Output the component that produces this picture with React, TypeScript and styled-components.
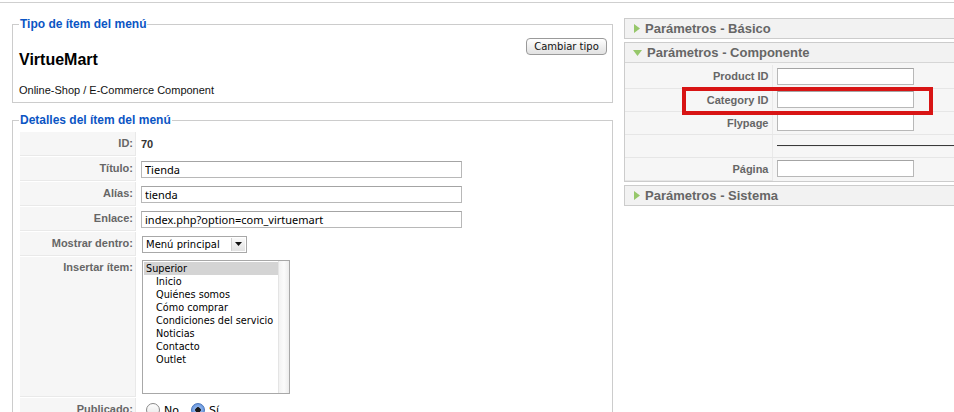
import React from 'react';
import styled, { createGlobalStyle } from 'styled-components';

const GlobalStyle = createGlobalStyle`
  html, body {
    margin: 0;
    padding: 0;
    overflow: hidden;
    background: #fff;
    font-family: "Liberation Sans", Arial, sans-serif;
  }
`;

const TopBar = styled.div`
  height: 2px;
  border-bottom: 1px solid #cfcfcf;
`;

const Columns = styled.div`
  display: flex;
  align-items: flex-start;
  gap: 11px;
  padding: 14px 0 0 12px;
`;

const LeftCol = styled.div`
  width: 601px;
  flex-shrink: 0;
`;

const RightCol = styled.div`
  position: relative;
  width: 340px;
  flex-shrink: 0;
  margin-top: 1px;
`;

const Fieldset = styled.fieldset<{ $gap?: number }>`
  margin: ${(p) => p.$gap ?? 0}px 0 0 0;
  padding: 0 5px 5px 6px;
  border: 1px solid #cccccc;
  min-width: 0;
  box-sizing: border-box;
`;

const Legend = styled.legend`
  padding: 0 1px;
  color: #0b55c4;
  font-size: 12px;
  font-weight: bold;
  line-height: 14px;
`;

const TypeHeader = styled.div`
  display: flex;
  justify-content: space-between;
  align-items: flex-start;
  margin-top: 7px;
`;

const TypeName = styled.h2`
  margin: 0;
  padding-top: 12px;
  font-size: 16px;
  line-height: 20px;
  font-weight: bold;
  color: #000;
`;

const TypeDesc = styled.div`
  margin-top: 13px;
  font-size: 11px;
  line-height: 14px;
  color: #111;
`;

const MacButton = styled.button`
  width: 81px;
  height: 17px;
  padding: 0;
  border: 1px solid #9a9a9a;
  border-radius: 4px;
  background: linear-gradient(#ffffff, #ececec 60%, #e2e2e2);
  font-family: "DejaVu Sans", sans-serif;
  font-size: 10px;
  line-height: 15px;
  color: #111;
`;

const AdminTable = styled.table`
  border-collapse: separate;
  border-spacing: 1px;
  margin: 4px 0 0 0;
`;

const KeyCell = styled.td<{ $top?: boolean }>`
  box-sizing: border-box;
  width: 116px;
  height: 24px;
  padding: ${(p) => (p.$top ? '4px 2px 0 0' : '0 2px 0 0')};
  vertical-align: ${(p) => (p.$top ? 'top' : 'middle')};
  text-align: right;
  background: #f6f6f6;
  border-bottom: 1px solid #e9e9e9;
  border-right: 1px solid #e9e9e9;
  color: #666;
  font-size: 11px;
  line-height: 13px;
  font-weight: bold;
`;

const ValueCell = styled.td<{ $top?: boolean }>`
  box-sizing: border-box;
  height: 24px;
  padding: ${(p) => (p.$top ? '3px 4px 3px 4px' : '0 4px')};
  vertical-align: ${(p) => (p.$top ? 'top' : 'middle')};
  font-size: 11px;
  line-height: 13px;
`;

const StrongValue = styled.span`
  font-weight: bold;
  color: #333;
`;

const TextInput = styled.input<{ $w: number }>`
  display: block;
  box-sizing: border-box;
  width: ${(p) => p.$w}px;
  height: 17px;
  margin: 0;
  padding: 0 3px;
  border: 1px solid #b8b8b8;
  border-top-color: #a4a4a4;
  background: #fff;
  font-family: "Noto Sans", "DejaVu Sans", sans-serif;
  font-size: 11px;
  color: #000;
  outline: none;
`;

const FakeSelect = styled.div`
  display: flex;
  box-sizing: border-box;
  width: 105px;
  height: 17px;
  margin-left: 1px;
  border: 1px solid #a8a8a8;
  background: #fff;
  font-family: "DejaVu Sans", sans-serif;
  font-size: 10px;
  line-height: 15px;
  color: #000;
`;

const SelectText = styled.span`
  flex: 1;
  padding-left: 3px;
`;

const SelectArrow = styled.span`
  display: flex;
  align-items: center;
  justify-content: center;
  width: 13px;
  margin: 1px;
  background: linear-gradient(#fafafa, #e2e2e2);
  border-left: 1px solid #d0d0d0;
`;

const ListBox = styled.div`
  display: flex;
  box-sizing: border-box;
  width: 148px;
  height: 134px;
  margin-left: 1px;
  border: 1px solid #a8a8a8;
  background: #fff;
  font-family: "DejaVu Sans", sans-serif;
  font-size: 9.7px;
`;

const ListItems = styled.div`
  flex: 1;
  padding: 1px 0 0 1px;
`;

const ListItem = styled.div<{ $selected?: boolean; $depth: number }>`
  height: 13px;
  line-height: 13px;
  padding-left: ${(p) => 2 + p.$depth * 10}px;
  background: ${(p) => (p.$selected ? '#d4d4d4' : 'transparent')};
  color: #000;
  white-space: nowrap;
`;

const ScrollTrack = styled.div`
  width: 10px;
  border-left: 1px solid #e4e4e4;
  background: linear-gradient(90deg, #f2f2f2, #fbfbfb 50%, #ececec);
`;

const RadioGroup = styled.div`
  display: flex;
  align-items: center;
  gap: 4px;
  padding-left: 5px;
  font-family: "DejaVu Sans", sans-serif;
  font-size: 11px;
`;

const Radio = styled.span<{ $on?: boolean }>`
  box-sizing: border-box;
  width: 14px;
  height: 14px;
  border-radius: 50%;
  border: 1px solid ${(p) => (p.$on ? '#4a74b8' : '#8a8a8a')};
  background: ${(p) =>
    p.$on
      ? 'radial-gradient(circle, #1a1a1a 0 2.5px, #8fb3ec 3px, #4f86d6)'
      : 'linear-gradient(#fefefe, #e6e6e6)'};
`;

const RadioLabel = styled.span`
  margin-right: 8px;
  color: #000;
`;

const Panel = styled.div`
  border: 1px solid #cccccc;
  margin-bottom: 3px;
  background: #f6f6f6;
`;

const PanelHeader = styled.div<{ $open?: boolean }>`
  display: flex;
  align-items: center;
  gap: 5px;
  height: 19px;
  padding-left: ${(p) => (p.$open ? 8 : 9)}px;
  background: #f2f2f2;
  border-bottom: ${(p) => (p.$open ? '1px solid #d6d6d6' : 'none')};
  color: #666;
  font-size: 13px;
  font-weight: bold;
  line-height: 19px;
`;

const ParamTable = styled.table`
  width: 100%;
  border-collapse: collapse;
  margin: 2px 0 0;
`;

const ParamKey = styled.td`
  box-sizing: border-box;
  width: 147px;
  height: 23px;
  padding: 0 3px 0 0;
  text-align: right;
  vertical-align: middle;
  border-bottom: 1px solid #e6e6e6;
  border-right: 1px solid #e9e9e9;
  color: #666;
  font-size: 11px;
  font-weight: bold;
`;

const ParamValue = styled.td<{ $last?: boolean }>`
  box-sizing: border-box;
  height: 23px;
  padding: 0 0 0 4px;
  vertical-align: middle;
  border-bottom: ${(p) => (p.$last ? 'none' : '1px solid #e6e6e6')};
`;

const Spacer = styled.hr`
  margin: 0;
  border: 0;
  border-top: 1px solid #3a3a3a;
  border-bottom: 1px solid #ececec;
`;

const Highlight = styled.div`
  position: absolute;
  left: 58px;
  top: 69px;
  width: 251px;
  height: 28px;
  box-sizing: border-box;
  border: 4px solid #d81414;
  pointer-events: none;
`;

function Arrow({ open }: { open?: boolean }) {
  return open ? (
    <svg width="9" height="6" viewBox="0 0 9 6">
      <path d="M0 0 H9 L4.5 6 Z" fill="#96c76a" />
    </svg>
  ) : (
    <svg width="6" height="9" viewBox="0 0 6 9">
      <path d="M0 0 L6 4.5 L0 9 Z" fill="#96c76a" />
    </svg>
  );
}

const menuItems = [
  { label: 'Superior', depth: 0, selected: true },
  { label: 'Inicio', depth: 1 },
  { label: 'Quiénes somos', depth: 1 },
  { label: 'Cómo comprar', depth: 1 },
  { label: 'Condiciones del servicio', depth: 1 },
  { label: 'Noticias', depth: 1 },
  { label: 'Contacto', depth: 1 },
  { label: 'Outlet', depth: 1 },
];

const params = [
  { key: 'Product ID' },
  { key: 'Category ID' },
  { key: 'Flypage' },
  { key: '', spacer: true },
  { key: 'Página' },
];

export default function App() {
  return (
    <>
      <GlobalStyle />
      <TopBar />
      <Columns>
        <LeftCol>
          <Fieldset>
            <Legend>Tipo de ítem del menú</Legend>
            <TypeHeader>
              <TypeName>VirtueMart</TypeName>
              <MacButton type="button">Cambiar tipo</MacButton>
            </TypeHeader>
            <TypeDesc>Online-Shop / E-Commerce Component</TypeDesc>
          </Fieldset>

          <Fieldset $gap={10}>
            <Legend>Detalles del ítem del menú</Legend>
            <AdminTable>
              <tbody>
                <tr>
                  <KeyCell>ID:</KeyCell>
                  <ValueCell>
                    <StrongValue>70</StrongValue>
                  </ValueCell>
                </tr>
                <tr>
                  <KeyCell>Título:</KeyCell>
                  <ValueCell>
                    <TextInput $w={321} defaultValue="Tienda" />
                  </ValueCell>
                </tr>
                <tr>
                  <KeyCell>Alías:</KeyCell>
                  <ValueCell>
                    <TextInput $w={321} defaultValue="tienda" />
                  </ValueCell>
                </tr>
                <tr>
                  <KeyCell>Enlace:</KeyCell>
                  <ValueCell>
                    <TextInput $w={321} defaultValue="index.php?option=com_virtuemart" />
                  </ValueCell>
                </tr>
                <tr>
                  <KeyCell>Mostrar dentro:</KeyCell>
                  <ValueCell>
                    <FakeSelect>
                      <SelectText>Menú principal</SelectText>
                      <SelectArrow>
                        <svg width="7" height="4" viewBox="0 0 7 4">
                          <path d="M0 0 H7 L3.5 4 Z" fill="#111" />
                        </svg>
                      </SelectArrow>
                    </FakeSelect>
                  </ValueCell>
                </tr>
                <tr>
                  <KeyCell $top>Insertar ítem:</KeyCell>
                  <ValueCell $top>
                    <ListBox>
                      <ListItems>
                        {menuItems.map((m) => (
                          <ListItem key={m.label} $depth={m.depth} $selected={m.selected}>
                            {m.label}
                          </ListItem>
                        ))}
                      </ListItems>
                      <ScrollTrack />
                    </ListBox>
                  </ValueCell>
                </tr>
                <tr>
                  <KeyCell>Publicado:</KeyCell>
                  <ValueCell>
                    <RadioGroup>
                      <Radio />
                      <RadioLabel>No</RadioLabel>
                      <Radio $on />
                      <RadioLabel>Sí</RadioLabel>
                    </RadioGroup>
                  </ValueCell>
                </tr>
              </tbody>
            </AdminTable>
          </Fieldset>
        </LeftCol>

        <RightCol>
          <Panel>
            <PanelHeader>
              <Arrow />
              Parámetros - Básico
            </PanelHeader>
          </Panel>
          <Panel>
            <PanelHeader $open>
              <Arrow open />
              Parámetros - Componente
            </PanelHeader>
            <ParamTable>
              <tbody>
                {params.map((p, i) => (
                  <tr key={i}>
                    <ParamKey>{p.key}</ParamKey>
                    <ParamValue $last={i === params.length - 1}>
                      {p.spacer ? <Spacer /> : <TextInput $w={137} />}
                    </ParamValue>
                  </tr>
                ))}
              </tbody>
            </ParamTable>
          </Panel>
          <Panel>
            <PanelHeader>
              <Arrow />
              Parámetros - Sistema
            </PanelHeader>
          </Panel>
          <Highlight />
        </RightCol>
      </Columns>
    </>
  );
}
